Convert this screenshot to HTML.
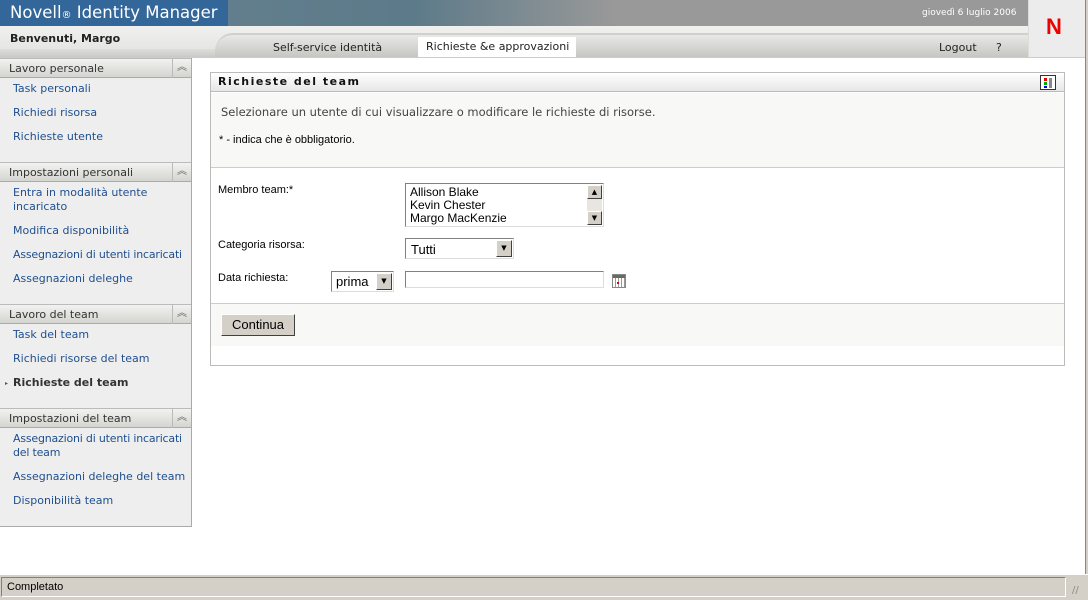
<!DOCTYPE html>
<html><head><meta charset="utf-8"><style>
*{margin:0;padding:0;box-sizing:border-box}
body{width:1088px;height:600px;overflow:hidden;background:#fff;font-family:"DejaVu Sans","Liberation Sans",sans-serif;position:relative;font-size:12px}
.a{position:absolute}
.lk{color:#1f4f8f;font-size:11px;position:absolute;left:13px;white-space:nowrap}
.sh{position:absolute;left:0;width:191px;height:20px;background:linear-gradient(#f2f2f0,#d4d4d0);border-top:1px solid #bbb;border-bottom:1px solid #aaa;font-size:11px;color:#333;padding:3px 0 0 9px}
.sh i{position:absolute;right:0;top:0;width:19px;height:19px;border-left:1px solid #bbb;font-style:normal;font-size:10px;text-align:center;line-height:18px;color:#666}
.f{font-family:"Liberation Sans",sans-serif;font-size:12px;color:#000}
.btn3d{background:#d4d0c8;border:1px solid;border-color:#fff #404040 #404040 #fff}
</style></head><body>
<div class="a" style="left:0;top:0;width:1028px;height:26px;background:linear-gradient(90deg,#6b8493 0,#5c7a89 40%,#999 60%,#999 100%)"></div>
<div class="a" style="left:0;top:0;width:228px;height:26px;background:#336699;color:#fff;font-size:16.5px;padding:3px 0 0 10px;font-family:'DejaVu Sans',sans-serif;white-space:nowrap;overflow:hidden">Novell<span style="font-size:10px">®</span> Identity Manager</div>
<div class="a" style="left:922px;top:8px;color:#fff;font-size:9px">giovedì 6 luglio 2006</div>
<div class="a" style="left:1028px;top:0;width:57px;height:57px;background:#ececec;border-left:1px solid #ddd"></div>
<div class="a" style="left:1046px;top:14px;color:#e00;font-size:22px;font-weight:bold;font-family:'Liberation Sans',sans-serif">N</div>
<div class="a" style="left:0;top:26px;width:1028px;height:31px;background:linear-gradient(#f0f0ee,#e2e2df)"></div>
<div class="a" style="left:0;top:49px;width:215px;height:8px;background:linear-gradient(#ddd,#c9c9c6)"></div>
<div class="a" style="left:215px;top:33px;width:813px;height:24px;background:linear-gradient(#e8e8e6,#c6c6c2);border-top:2px solid #d0d0ce;border-radius:18px 0 0 0"></div>
<div class="a" style="left:10px;top:32px;font-weight:bold;font-size:11px;color:#222">Benvenuti, Margo</div>
<div class="a" style="left:273px;top:41px;font-size:11px;color:#222">Self-service identità</div>
<div class="a" style="left:418px;top:37px;width:158px;height:21px;background:#fff;font-size:11px;color:#222;padding:3px 0 0 8px;white-space:nowrap">Richieste &amp;e approvazioni</div>
<div class="a" style="left:939px;top:41px;font-size:11px;color:#222">Logout</div>
<div class="a" style="left:996px;top:41px;font-size:11px;color:#222">?</div>
<div class="a" style="left:0;top:57px;width:1085px;height:1px;background:#ccc"></div>

<div class="a" style="left:0;top:58px;width:192px;height:469px;background:#eeeeee;border-right:1px solid #aaa;border-bottom:1px solid #aaa"></div>
<div class="sh" style="top:58px">Lavoro personale<i>︽</i></div>
<div class="lk" style="top:82px">Task personali</div>
<div class="lk" style="top:106px">Richiedi risorsa</div>
<div class="lk" style="top:130px">Richieste utente</div>
<div class="sh" style="top:162px">Impostazioni personali<i>︽</i></div>
<div class="lk" style="top:186px;line-height:14px">Entra in modalità utente<br>incaricato</div>
<div class="lk" style="top:224px">Modifica disponibilità</div>
<div class="lk" style="top:248px;letter-spacing:-0.2px">Assegnazioni di utenti incaricati</div>
<div class="lk" style="top:272px">Assegnazioni deleghe</div>
<div class="sh" style="top:304px">Lavoro del team<i>︽</i></div>
<div class="lk" style="top:328px">Task del team</div>
<div class="lk" style="top:352px">Richiedi risorse del team</div>
<div class="lk" style="top:376px;color:#333;font-weight:bold">Richieste del team</div>
<div class="a" style="left:5px;top:380px;font-size:6px;color:#555">▸</div>
<div class="sh" style="top:408px">Impostazioni del team<i>︽</i></div>
<div class="lk" style="top:432px;line-height:14px;letter-spacing:-0.2px">Assegnazioni di utenti incaricati<br>del team</div>
<div class="lk" style="top:470px">Assegnazioni deleghe del team</div>
<div class="lk" style="top:494px">Disponibilità team</div>

<div class="a" style="left:210px;top:72px;width:855px;height:294px;border:1px solid #bbb;background:#fff"></div>
<div class="a" style="left:211px;top:73px;width:853px;height:19px;background:linear-gradient(#fff,#e6e6e6);border-bottom:1px solid #bbb;font-weight:bold;font-size:11px;letter-spacing:1.5px;padding:2px 0 0 7px;color:#111">Richieste del team</div>
<div class="a" style="left:1040px;top:75px;width:16px;height:15px;border:1px solid #333;background:#fff"><div class="a" style="left:3px;top:2px;width:3px;height:3px;background:#e00"></div><div class="a" style="left:3px;top:6px;width:3px;height:3px;background:#0a0"></div><div class="a" style="left:3px;top:10px;width:3px;height:2px;background:#00e"></div><div class="a" style="left:8px;top:2px;width:3px;height:10px;background:#888"></div></div>
<div class="a" style="left:211px;top:93px;width:853px;height:75px;background:#f8f8f7;border-bottom:1px solid #ccc"></div>
<div class="a" style="left:221px;top:105px;font-size:11.5px;color:#444">Selezionare un utente di cui visualizzare o modificare le richieste di risorse.</div>
<div class="a f" style="left:219px;top:134px;font-size:11px">* - indica che è obbligatorio.</div>
<div class="a f" style="left:218px;top:184px;font-size:11px">Membro team:*</div>
<div class="a f" style="left:218px;top:239px;font-size:11px">Categoria risorsa:</div>
<div class="a f" style="left:218px;top:272px;font-size:11px">Data richiesta:</div>
<div class="a" style="left:405px;top:183px;width:199px;height:44px;border:1px solid;border-color:#808080 #ddd #ddd #808080;background:#fff"></div>
<div class="a f" style="left:410px;top:186px;line-height:13px">Allison Blake<br>Kevin Chester<br>Margo MacKenzie</div>
<div class="a btn3d" style="left:587px;top:185px;width:15px;height:14px;font-size:7px;text-align:center;line-height:12px">▲</div>
<div class="a" style="left:587px;top:199px;width:15px;height:12px;background:#e8e6e0"></div>
<div class="a btn3d" style="left:587px;top:211px;width:15px;height:14px;font-size:7px;text-align:center;line-height:12px">▼</div>
<div class="a" style="left:405px;top:238px;width:109px;height:21px;border:1px solid;border-color:#808080 #ddd #ddd #808080;background:#fff"></div>
<div class="a f" style="left:411px;top:242px;font-size:13px">Tutti</div>
<div class="a btn3d" style="left:496px;top:240px;width:16px;height:17px;font-size:7px;text-align:center;line-height:15px">▼</div>
<div class="a" style="left:331px;top:271px;width:63px;height:21px;border:1px solid;border-color:#808080 #ddd #ddd #808080;background:#fff"></div>
<div class="a f" style="left:336px;top:274px;font-size:13px">prima</div>
<div class="a btn3d" style="left:376px;top:273px;width:16px;height:17px;font-size:7px;text-align:center;line-height:15px">▼</div>
<div class="a" style="left:405px;top:271px;width:199px;height:17px;border:1px solid;border-color:#808080 #ddd #ddd #808080;background:#fff"></div>
<div class="a" style="left:612px;top:274px;width:14px;height:14px;border:1px solid #888;background:repeating-linear-gradient(90deg,#fff 0 2px,#999 2px 3px),#fff"><div style="height:3px;background:#6a6a5a"></div><div class="a" style="left:4px;top:7px;width:2px;height:2px;background:#e00"></div></div>
<div class="a" style="left:211px;top:303px;width:853px;height:43px;background:#f8f8f7;border-top:1px solid #ccc"></div>
<div class="a btn3d f" style="left:221px;top:314px;width:74px;height:22px;font-size:13px;text-align:center;line-height:20px">Continua</div>

<div class="a" style="left:1085px;top:0;width:3px;height:576px;background:#d4d0c8;border-left:1px solid #888"></div>
<div class="a" style="left:0;top:574px;width:1088px;height:26px;background:#d4d0c8;border-top:1px solid #fff"></div>
<div class="a" style="left:1px;top:577px;width:1065px;height:20px;border:1px solid;border-color:#808080 #fff #fff #808080"></div>
<div class="a f" style="left:7px;top:581px;font-size:11px">Completato</div>
<div class="a" style="left:1072px;top:585px;font-size:10px;color:#888">//</div>
</body></html>
